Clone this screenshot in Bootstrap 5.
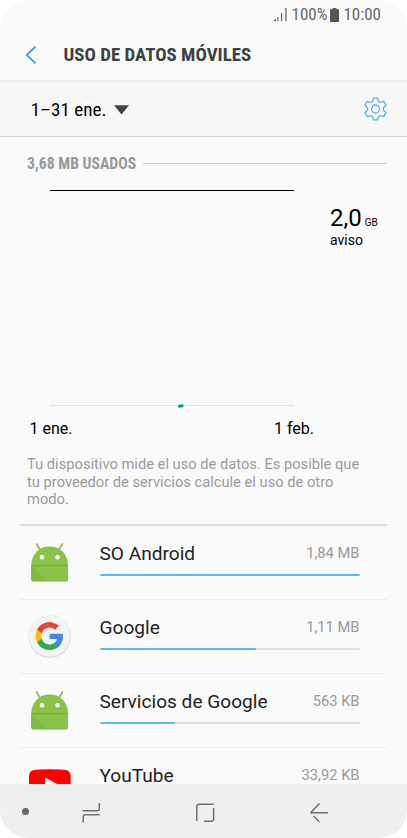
<!DOCTYPE html>
<html lang="es">
<head>
<meta charset="utf-8">
<meta name="viewport" content="width=device-width, initial-scale=1">
<title>Uso de datos móviles</title>
<link href="https://cdn.jsdelivr.net/npm/bootstrap@5.3.0/dist/css/bootstrap.min.css" rel="stylesheet">
<style>
body{font-family:Roboto,"Noto Sans",sans-serif;color:#000;background:#fff}
svg{display:block;flex:none}
.phone{width:407px;height:838px;background:#fafafa;border-radius:28px}
.condensed{font-stretch:75%}
.status-line{height:29px;padding-right:26px;font-size:17px;line-height:29px;color:#666}
.status-line .level{margin:0 3px 0 5px}
.status-line .clock{margin-left:4px}
.title-bar{height:53px;padding-left:25px;border-bottom:2px solid #efefef}
.title-bar h1{font-size:18.9px;line-height:53px;margin:0 0 0 26.5px;font-weight:700;color:#3f3f3f}
.cycle-bar{height:55px;padding:1px 20px 0 30.700px;background:#f7f7f7;border-bottom:1px solid #d8d8d8}
.cycle-bar button{font-size:19.1px;line-height:53px;color:#000}
.cycle-bar .caret{margin-left:7.500px}
.cycle-bar .gear{margin-top:-2px}
.usage-head{height:53px;padding:1px 20px 0 27px;font-size:15.7px;font-weight:700;line-height:54px;color:#999}
.usage-head hr{height:1px;margin:-1px 0 0 6.500px;border:0;background:#ccc;opacity:1}
.chart-area{height:218px}
.plot{width:244px;margin-left:50px;border-top:1px solid #000}
.warn{margin-left:36px;padding-top:14px}
.warn-value{height:28px;font-size:24px;line-height:28px}
.warn-unit{font-size:10px;margin-left:3px}
.warn-name{font-size:14px;line-height:16px}
.dates{height:44px;padding:0 93px 0 29.5px;font-size:16px;line-height:41px}
.note{height:74px;margin:0 20px;padding:4px 7px 0;font-size:14.7px;line-height:17.5px;color:#9a9a9a;border-bottom:2px solid #e0e0e0}
.apps{height:257.5px;margin:0 20px}
.app-row{height:74px;border-bottom:1px solid #ededed}
.app-icon{width:60px;height:58px;overflow:visible}
.app-info{margin-left:19.500px;width:260px}
.app-text{height:48px;padding-top:16px;line-height:24px}
.app-name{font-size:19.1px;color:#222}
.app-size{font-size:14.7px;color:#999;line-height:23px}
.usage-bar{height:2px;background:#dfdfdf;border-radius:1px}
.usage-bar .progress-bar{background:#5fb9df;border-radius:1px}
.nav-keys{height:54.5px;background:#efefef}
</style>
</head>
<body>
<svg width="0" height="0" class="d-none" aria-hidden="true">
  <symbol id="android" viewBox="0 0 60 58">
    <path d="M16.600 18l3.600 6M42.400 18l-3.600 6" stroke="#8dbb58" stroke-width="1.700" stroke-linecap="round"/>
    <path d="M11.300 39.500V53.400q0 2.100 2 2.100H46q2 0 2-2.100V39.500z" fill="#7da453"/>
    <path d="M11.300 39.500C11.300 28 19 20.400 29.700 20.400S48 28 48 39.500V53q0 1.700-2 1.700H13.300q-2 0-2-1.700z" fill="#8bc34a"/>
    <path d="M11.300 39.600L26.500 54.700H13.300q-2 0-2-1.700z" fill="#83b748"/>
    <path d="M11.300 39.600H48" stroke="#73a13e" stroke-width=".8"/>
    <circle cx="22" cy="31.300" r="2.200" fill="#fff"/><circle cx="37.600" cy="31.300" r="2.200" fill="#fff"/>
  </symbol>
</svg>
<main class="phone d-flex flex-column overflow-hidden">
  <div class="status-line condensed d-flex justify-content-end align-items-center">
    <svg width="14" height="13" viewBox="0 0 14 13" fill="#666"><path d="M0 13l3-2.500V13zM4.200 9h1.200v4H4.200zM8 5h1.200v8H8zM12.300 0h1.300v13h-1.300z"/></svg>
    <span class="level">100%</span>
    <svg width="9" height="14" viewBox="0 0 9 14" fill="#555"><path d="M2.500 0h4v1.300H9V14H0V1.300h2.500z"/></svg>
    <span class="clock">10:00</span>
  </div>
  <header class="title-bar d-flex align-items-center">
    <svg width="12" height="18" viewBox="0 0 12 18" fill="none" stroke="#459dc2" stroke-width="1.800"><path d="M10.500.7L1.700 9l8.800 8.300"/></svg>
    <h1 class="condensed">USO DE DATOS MÓVILES</h1>
  </header>
  <div class="cycle-bar d-flex align-items-center justify-content-between">
    <button class="condensed bg-transparent border-0 p-0 d-flex align-items-center" type="button">1–31 ene.
      <svg class="caret" width="15" height="10" viewBox="0 0 15 10" fill="#444"><path d="M0 .3h15L7.500 9.600z"/></svg>
    </button>
    <svg class="gear" width="23" height="24" viewBox="0 0 23 24" fill="none" stroke="#5bb5d8" stroke-width="1.300" stroke-linejoin="round"><circle cx="11.500" cy="12" r="4"/><path d="M9.300 1.200h4.400l.8 2.800q.3.800 1.200 1.100.7.300 1.300.1l2.700-.9 2.300 3.900-2.100 2q-.6.600-.6 1.800t.6 1.800l2.100 2-2.300 3.900-2.700-.9q-.6-.2-1.300.1-.900.3-1.200 1.100l-.8 2.800H9.300l-.8-2.800q-.3-.8-1.200-1.100-.7-.3-1.300-.1l-2.700.9L1 15.800l2.100-2q.6-.6.600-1.800t-.6-1.800L1 8.200l2.300-3.900 2.700.9q.6.200 1.300-.1.900-.3 1.200-1.100z"/></svg>
  </div>
  <div class="usage-head condensed d-flex align-items-center"><span>3,68 MB USADOS</span><hr class="flex-grow-1"></div>
  <section class="chart-area d-flex">
    <div class="plot d-flex align-items-end">
      <svg width="244" height="4" viewBox="0 0 244 4"><path d="M0 1.500h244" stroke="#e2e2e2"/><path d="M129.400 2.200l2.700-.4" stroke="#109688" stroke-width="3" stroke-linecap="round"/></svg>
    </div>
    <div class="warn">
      <div class="warn-value">2,0<span class="warn-unit">GB</span></div>
      <div class="warn-name">aviso</div>
    </div>
  </section>
  <div class="dates d-flex justify-content-between"><span>1 ene.</span><span>1 feb.</span></div>
  <p class="note mb-0">Tu dispositivo mide el uso de datos. Es posible que<br>tu proveedor de servicios calcule el uso de otro<br>modo.</p>
  <section class="apps overflow-hidden">
    <div class="app-row d-flex">
      <svg class="app-icon"><use href="#android"/></svg>
      <div class="app-info">
        <div class="app-text d-flex justify-content-between"><span class="app-name">SO Android</span><span class="app-size">1,84 MB</span></div>
        <div class="usage-bar progress"><div class="progress-bar" style="width:100%"></div></div>
      </div>
    </div>
    <div class="app-row d-flex">
      <svg class="app-icon" viewBox="0 0 60 58">
        <circle cx="29.700" cy="36.800" r="21" fill="#cfcfcf"/><circle cx="29.700" cy="36" r="20.800" fill="#f4f4f4" stroke="#e6e6e6" stroke-width=".5"/>
        <g transform="translate(15.600 22) scale(1.165)">
          <path fill="#4285f4" d="M23.500 12.300c0-.8-.1-1.600-.2-2.300H12v4.500h6.500a5.500 5.500 0 0 1-2.400 3.600v3h3.900c2.200-2.100 3.500-5.200 3.500-8.800z"/>
          <path fill="#34a853" d="M12 24c3.200 0 6-1.100 8-2.900l-3.900-3a7.200 7.200 0 0 1-10.800-3.800h-4v3.100A12 12 0 0 0 12 24z"/>
          <path fill="#fbbc05" d="M5.300 14.300a7.200 7.200 0 0 1 0-4.600V6.600h-4a12 12 0 0 0 0 10.800z"/>
          <path fill="#ea4335" d="M12 4.800c1.800 0 3.300.6 4.600 1.800L20 3.200A12 12 0 0 0 1.300 6.600l4 3.100A7.200 7.200 0 0 1 12 4.800z"/>
        </g>
      </svg>
      <div class="app-info">
        <div class="app-text d-flex justify-content-between"><span class="app-name">Google</span><span class="app-size">1,11 MB</span></div>
        <div class="usage-bar progress"><div class="progress-bar" style="width:60%"></div></div>
      </div>
    </div>
    <div class="app-row d-flex">
      <svg class="app-icon"><use href="#android"/></svg>
      <div class="app-info">
        <div class="app-text d-flex justify-content-between"><span class="app-name">Servicios de Google</span><span class="app-size">563 KB</span></div>
        <div class="usage-bar progress"><div class="progress-bar" style="width:29%"></div></div>
      </div>
    </div>
    <div class="app-row d-flex">
      <svg class="app-icon" viewBox="0 0 60 58"><path d="M9 35v-7q.5-5 4-5.800 4-.9 16.700-.9t17 .9q3.500.8 4 5.800v17q-.5 5-4 5.800-17 1.500-34 0-3.400-.8-3.700-5.800z" fill="#f00"/><path d="M25.200 29.500l13 7-13 7z" fill="#fff"/></svg>
      <div class="app-info">
        <div class="app-text d-flex justify-content-between"><span class="app-name">YouTube</span><span class="app-size">33,92 KB</span></div>
      </div>
    </div>
  </section>
  <nav class="nav-keys">
    <svg width="407" height="54" viewBox="0 783.500 407 54" fill="none" stroke="#707070" stroke-width="1.500">
      <circle cx="25.500" cy="811" r="3.500" fill="#666" stroke="none"/>
      <path d="M82.500 810.300H97q2.300 0 2.300-2.300v-5.500M99.800 814.300H85.500q-2.300 0-2.300 2.300v5.500"/>
      <path d="M196.800 820.500v-14.500q0-2.300 2.300-2.300h14.700M204 820.700h7.300q2.300 0 2.300-2.300v-11"/>
      <path d="M328 812.300h-17M319.500 803l-8 8.300q-1 1 0 1.500M313.500 815.500l5.800 6"/>
    </svg>
  </nav>
</main>
<script src="https://cdn.jsdelivr.net/npm/bootstrap@5.3.0/dist/js/bootstrap.bundle.min.js"></script>
</body>
</html>
